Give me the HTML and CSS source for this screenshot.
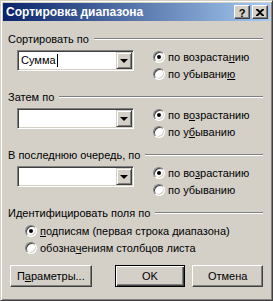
FILE: index.html
```html
<!DOCTYPE html>
<html>
<head>
    <title>Сортировка диапазона</title>
    <link rel="stylesheet" href="styles.css">
</head>
<body>

<div class="window">
    <div class="titlebar">
        <span class="title">Сортировка диапазона</span>
        <div class="title-btns">
            <span class="tbtn help">?</span>
            <span class="tbtn">
                <svg width="8" height="7" viewBox="0 0 8 7">
                    <path d="M0 0h2l2 2 2-2h2v1L5 3.5 8 6v1H6L4 5 2 7H0V6l3-2.5L0 1z" fill="#000"/>
                </svg>
            </span>
        </div>
    </div>

    <div class="body">
        <div class="group">
            <div class="group-head"><span>Сортировать по</span><span class="rule"></span></div>
            <div class="group-row">
                <div class="combo">
                    <div class="field">Сумма<span class="caret"></span></div>
                    <div class="drop"><span class="arrow"></span></div>
                </div>
                <div class="radios">
                    <div class="radio"><span class="circle on"></span>по возраста<u>н</u>ию</div>
                    <div class="radio"><span class="circle"></span>по убывани<u>ю</u></div>
                </div>
            </div>
        </div>

        <div class="group">
            <div class="group-head"><span>Затем по</span><span class="rule"></span></div>
            <div class="group-row">
                <div class="combo">
                    <div class="field"></div>
                    <div class="drop"><span class="arrow"></span></div>
                </div>
                <div class="radios">
                    <div class="radio"><span class="circle on"></span>по в<u>о</u>зрастанию</div>
                    <div class="radio"><span class="circle"></span>по у<u>б</u>ыванию</div>
                </div>
            </div>
        </div>

        <div class="group">
            <div class="group-head"><span>В последнюю очередь, по</span><span class="rule"></span></div>
            <div class="group-row">
                <div class="combo">
                    <div class="field"></div>
                    <div class="drop"><span class="arrow"></span></div>
                </div>
                <div class="radios">
                    <div class="radio"><span class="circle on"></span>по во<u>з</u>растанию</div>
                    <div class="radio"><span class="circle"></span>по убыванию</div>
                </div>
            </div>
        </div>

        <div class="group last">
            <div class="group-head"><span>Идентифицировать поля по</span><span class="rule"></span></div>
            <div class="radios wide">
                <div class="radio"><span class="circle on"></span><u>п</u>одписям (первая строка диапазона)</div>
                <div class="radio"><span class="circle"></span>обозна<u>ч</u>ениям столбцов листа</div>
            </div>
        </div>

        <div class="buttons">
            <div class="btn params">П<u>а</u>раметры...</div>
            <div class="btn ok">OK</div>
            <div class="btn cancel">Отмена</div>
        </div>
    </div>
</div>

</body>
</html>
```

FILE: styles.css
```css
body {
    margin: 0;
    padding: 0;
    font-family: "Liberation Sans", Arial, sans-serif;
    font-size: 11px;
    color: #000;
    background: #d4d0c8;
}
.window {
    width: 273px;
    height: 301px;
    box-sizing: border-box;
    background: #d4d0c8;
    border: 1px solid;
    border-color: #d4d0c8 #404040 #404040 #d4d0c8;
    box-shadow: inset 1px 1px #fff, inset -1px -1px #808080;
    padding: 2px;
    display: flex;
    flex-direction: column;
}
.titlebar {
    height: 18px;
    background: linear-gradient(to right, #0a246a, #a6caf0);
    display: flex;
    align-items: center;
    justify-content: space-between;
    padding: 0 2px 0 3px;
}
.title {
    color: #fff;
    font-weight: bold;
    font-size: 12px;
    white-space: nowrap;
}
.title-btns {
    display: flex;
    gap: 2px;
}
.tbtn {
    width: 14px;
    height: 12px;
    background: #d4d0c8;
    border: 1px solid;
    border-color: #fff #404040 #404040 #fff;
    box-shadow: inset -1px -1px #808080;
    display: flex;
    align-items: center;
    justify-content: center;
    font-weight: bold;
    font-size: 11px;
    line-height: 12px;
}
.help {
    padding-top: 1px;
    height: 11px;
}
.body {
    flex: 1;
    padding: 11px 7px 0 5px;
    display: flex;
    flex-direction: column;
}
.group {
    margin-bottom: 8px;
}
.group-head {
    display: flex;
    align-items: center;
    height: 13px;
    white-space: nowrap;
}
.rule {
    flex: 1;
    height: 0;
    margin-left: 5px;
    border-top: 1px solid #808080;
    border-bottom: 1px solid #fff;
}
.group-row {
    display: flex;
    align-items: flex-start;
    margin-top: 3px;
    padding-left: 9px;
}
.combo {
    width: 113px;
    height: 17px;
    margin-top: 2px;
    background: #fff;
    border: 1px solid;
    border-color: #808080 #fff #fff #808080;
    box-shadow: inset 1px 1px #404040, inset -1px -1px #d4d0c8;
    padding: 1px;
    display: flex;
}
.field {
    flex: 1;
    padding-left: 2px;
    line-height: 17px;
    display: flex;
    align-items: center;
}
.caret {
    width: 1px;
    height: 13px;
    background: #000;
    margin-left: 1px;
}
.drop {
    width: 14px;
    height: 15px;
    background: #d4d0c8;
    border: 1px solid;
    border-color: #d4d0c8 #404040 #404040 #d4d0c8;
    box-shadow: inset 1px 1px #fff, inset -1px -1px #808080;
    display: flex;
    align-items: center;
    justify-content: center;
}
.arrow {
    width: 0;
    height: 0;
    border-left: 4px solid transparent;
    border-right: 4px solid transparent;
    border-top: 4px solid #000;
    margin-top: 1px;
}
.radios {
    margin-left: 19px;
}
.radios.wide {
    margin: 3px 0 0 17px;
}
.radio {
    height: 17px;
    display: flex;
    align-items: center;
    white-space: nowrap;
}
.circle {
    width: 10px;
    height: 10px;
    border-radius: 50%;
    background: #fff;
    border: 1px solid;
    border-color: #808080 #fff #fff #808080;
    box-shadow: inset 1px 1px #404040, inset -1px -1px #d4d0c8;
    margin-right: 3px;
    display: flex;
    align-items: center;
    justify-content: center;
}
.circle.on::after {
    content: "";
    width: 4px;
    height: 4px;
    border-radius: 50%;
    background: #000;
}
.buttons {
    display: flex;
    margin-top: 1px;
    padding-left: 2px;
}
.btn {
    height: 22px;
    box-sizing: border-box;
    border: 1px solid;
    border-color: #fff #404040 #404040 #fff;
    box-shadow: inset -1px -1px #808080;
    display: flex;
    align-items: center;
    justify-content: center;
    width: 71px;
}
.params {
    width: 82px;
}
.ok {
    margin-left: 23px;
    border: 1px solid #000;
    box-shadow: inset 1px 1px #fff, inset -1px -1px #404040, inset -2px -2px #808080;
}
.cancel {
    margin-left: 7px;
}
```
